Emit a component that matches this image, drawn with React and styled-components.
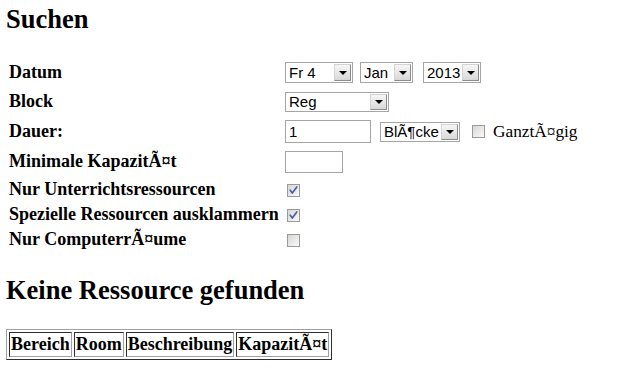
import React, { useId } from 'react';
import styled, { createGlobalStyle } from 'styled-components';

const Global = createGlobalStyle`
  html, body { margin: 0; padding: 0; background: #fff; }
  body { font-family: "Liberation Serif", "Times New Roman", serif; color: #000; }
`;

const Page = styled.div`
  box-sizing: border-box;
  width: 626px;
  padding: 0 6px;
`;

const Heading = styled.h2`
  margin: ${(p) => p.$mt}px 0 ${(p) => p.$mb}px 0;
  font-family: "Liberation Serif", "Times New Roman", serif;
  font-size: 26.5px;
  line-height: 30px;
  font-weight: bold;
`;

const FormGrid = styled.div`
  display: grid;
  grid-template-columns: 276px auto;
  grid-template-rows: 29px 29px 31px 29px 26px 25px 25px;
  align-items: center;
  padding-left: 3px;
`;

const Label = styled.div`
  font-size: 18px;
  line-height: 21px;
  font-weight: bold;
  white-space: nowrap;
`;

const Controls = styled.div`
  display: flex;
  align-items: center;
  height: 100%;
`;

const SelectBox = styled.div`
  box-sizing: border-box;
  display: flex;
  align-items: stretch;
  width: ${(p) => p.$w}px;
  height: ${(p) => p.$h}px;
  margin-left: ${(p) => p.$ml || 0}px;
  border: 1px solid #a5a5a5;
  background: #fff;
  font-family: "Liberation Sans", Arial, sans-serif;
  font-size: 15px;
`;

const SelectValue = styled.span`
  flex: 1;
  display: flex;
  align-items: center;
  padding-left: 3px;
  overflow: hidden;
  white-space: nowrap;
`;

const ArrowButton = styled.span`
  box-sizing: border-box;
  flex: none;
  width: 17px;
  margin: 1px;
  border: 1px solid;
  border-color: #d4d4d4 #8c8c8c #8c8c8c #d4d4d4;
  background: linear-gradient(#f6f6f6, #d8d8d8);
  display: flex;
  align-items: center;
  justify-content: center;
  &::after {
    content: "";
    border-left: 4px solid transparent;
    border-right: 4px solid transparent;
    border-top: 4px solid #000;
  }
`;

const TextInput = styled.input`
  box-sizing: border-box;
  width: ${(p) => p.$w}px;
  height: ${(p) => p.$h}px;
  margin: 0;
  padding: 0 0 0 3px;
  border: 1px solid #a5a5a5;
  background: #fff;
  font-family: "Liberation Sans", Arial, sans-serif;
  font-size: 15px;
  color: #000;
  outline: none;
`;

const CheckWrap = styled.span`
  display: inline-flex;
  margin-left: ${(p) => p.$ml}px;
  margin-top: ${(p) => p.$mt || 0}px;
`;

const InlineText = styled.span`
  margin-left: 8px;
  font-size: 17.3px;
  line-height: 21px;
  white-space: nowrap;
`;

const ResultTable = styled.table`
  border-collapse: separate;
  border-spacing: 2px;
  border: 1px solid;
  border-color: #a0a0a0 #303030 #303030 #a0a0a0;
`;

const HeadCell = styled.th`
  padding: 1px;
  border: 1px solid;
  border-color: #303030 #a0a0a0 #a0a0a0 #303030;
  font-family: "Liberation Serif", "Times New Roman", serif;
  font-size: 18px;
  line-height: 21px;
  font-weight: bold;
  text-align: left;
  white-space: nowrap;
`;

function Checkbox({ checked, ml = 2, mt = 0 }) {
  const id = useId().replace(/:/g, '');
  return (
    <CheckWrap $ml={ml} $mt={mt}>
      <svg width="13" height="13" viewBox="0 0 13 13">
        <defs>
          <linearGradient id={`g${id}`} x1="0" y1="0" x2="1" y2="1">
            <stop offset="0" stopColor="#d4d4d0" />
            <stop offset="1" stopColor="#fbfbfb" />
          </linearGradient>
        </defs>
        <rect x="0.5" y="0.5" width="12" height="12" fill={`url(#g${id})`} stroke="#9a9a9a" />
        {checked && (
          <path d="M3.2 6.2 L5.3 9 L9.8 3" stroke="#4a5ea6" strokeWidth="1.7" fill="none" strokeLinecap="round" strokeLinejoin="round" />
        )}
      </svg>
    </CheckWrap>
  );
}

function Select({ value, w, h = 20, ml }) {
  return (
    <SelectBox $w={w} $h={h} $ml={ml}>
      <SelectValue>{value}</SelectValue>
      <ArrowButton />
    </SelectBox>
  );
}

export default function App() {
  return (
    <Page>
      <Global />
      <Heading $mt={4} $mb={24}>Suchen</Heading>
      <FormGrid>
        <Label>Datum</Label>
        <Controls>
          <Select value="Fr 4" w={68} h={21} />
          <Select value="Jan" w={53} h={21} ml={7} />
          <Select value="2013" w={58} h={21} ml={10} />
        </Controls>

        <Label>Block</Label>
        <Controls>
          <Select value="Reg" w={104} h={20} />
        </Controls>

        <Label>Dauer:</Label>
        <Controls>
          <TextInput $w={86} $h={23} defaultValue="1" readOnly />
          <Select value="BlÃ¶cke" w={80} h={20} ml={9} />
          <Checkbox ml={12} />
          <InlineText>GanztÃ¤gig</InlineText>
        </Controls>

        <Label>Minimale KapazitÃ¤t</Label>
        <Controls>
          <TextInput $w={58} $h={22} defaultValue="" readOnly />
        </Controls>

        <Label>Nur Unterrichtsressourcen</Label>
        <Controls>
          <Checkbox checked mt={2} />
        </Controls>

        <Label>Spezielle Ressourcen ausklammern</Label>
        <Controls>
          <Checkbox checked mt={1} />
        </Controls>

        <Label>Nur ComputerrÃ¤ume</Label>
        <Controls>
          <Checkbox mt={1} />
        </Controls>
      </FormGrid>
      <Heading $mt={23} $mb={24}>Keine Ressource gefunden</Heading>
      <ResultTable>
        <thead>
          <tr>
            <HeadCell>Bereich</HeadCell>
            <HeadCell>Room</HeadCell>
            <HeadCell>Beschreibung</HeadCell>
            <HeadCell>KapazitÃ¤t</HeadCell>
          </tr>
        </thead>
      </ResultTable>
    </Page>
  );
}
